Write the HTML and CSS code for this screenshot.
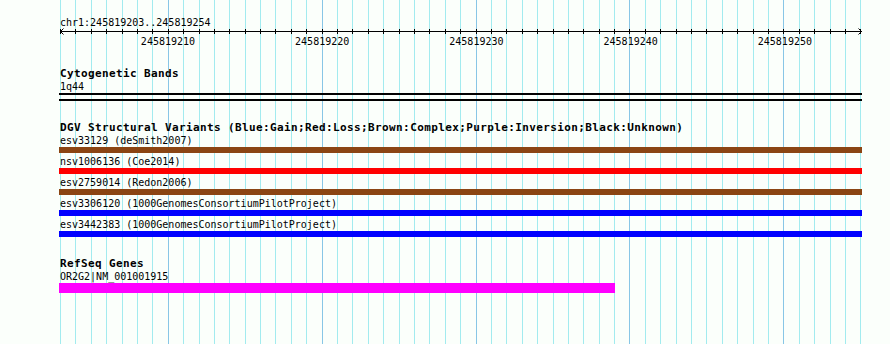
FILE: index.html
```html
<!DOCTYPE html>
<html>
<head>
<meta charset="utf-8">
<title>Genome browser</title>
<link rel="stylesheet" href="styles.css">
</head>
<body>
<div class="view">
  <div class="gridlines">
    <i></i><i></i><i></i><i></i><i></i><i></i><i></i><i class="major"></i><i></i><i></i>
    <i></i><i></i><i></i><i></i><i></i><i></i><i></i><i class="major"></i><i></i><i></i>
    <i></i><i></i><i></i><i></i><i></i><i></i><i></i><i class="major"></i><i></i><i></i>
    <i></i><i></i><i></i><i></i><i></i><i></i><i></i><i class="major"></i><i></i><i></i>
    <i></i><i></i><i></i><i></i><i></i><i></i><i></i><i class="major"></i><i></i><i></i>
    <i></i><i></i><i></i>
  </div>
  <div class="content">
    <div class="ruler">
      <div class="loc">chr1:245819203..245819254</div>
      <div class="axis">
        <div class="ticks">
          <i></i><i></i><i></i><i></i><i></i><i></i><i></i><i></i><i></i><i></i>
          <i></i><i></i><i></i><i></i><i></i><i></i><i></i><i></i><i></i><i></i>
          <i></i><i></i><i></i><i></i><i></i><i></i><i></i><i></i><i></i><i></i>
          <i></i><i></i><i></i><i></i><i></i><i></i><i></i><i></i><i></i><i></i>
          <i></i><i></i><i></i><i></i><i></i><i></i><i></i><i></i><i></i><i></i>
          <i></i><i></i><i></i>
        </div>
        <svg class="arrow arrow-left" width="5" height="7" viewBox="0 0 5 7"><path d="M3.5 0.5 L0.5 3.5 L3.5 6.5" fill="none" stroke="#000" stroke-width="1"/></svg>
        <svg class="arrow arrow-right" width="5" height="7" viewBox="0 0 5 7"><path d="M1.5 0.5 L4.5 3.5 L1.5 6.5" fill="none" stroke="#000" stroke-width="1"/></svg>
      </div>
      <div class="scale">
        <span class="s1">245819210</span>
        <span class="s2">245819220</span>
        <span class="s3">245819230</span>
        <span class="s4">245819240</span>
        <span class="s5">245819250</span>
      </div>
    </div>

    <div class="track track-cyto">
      <div class="track-title">Cytogenetic Bands</div>
      <div class="feature-label">1q44</div>
      <div class="band"></div>
    </div>

    <div class="track track-dgv">
      <div class="track-title">DGV Structural Variants (Blue:Gain;Red:Loss;Brown:Complex;Purple:Inversion;Black:Unknown)</div>
      <div class="feature">
        <div class="feature-label">esv33129 (deSmith2007)</div>
        <div class="bar bar-brown"></div>
      </div>
      <div class="feature">
        <div class="feature-label">nsv1006136 (Coe2014)</div>
        <div class="bar bar-red"></div>
      </div>
      <div class="feature">
        <div class="feature-label">esv2759014 (Redon2006)</div>
        <div class="bar bar-brown"></div>
      </div>
      <div class="feature">
        <div class="feature-label">esv3306120 (1000GenomesConsortiumPilotProject)</div>
        <div class="bar bar-blue"></div>
      </div>
      <div class="feature">
        <div class="feature-label">esv3442383 (1000GenomesConsortiumPilotProject)</div>
        <div class="bar bar-blue"></div>
      </div>
    </div>

    <div class="track track-refseq">
      <div class="track-title">RefSeq Genes</div>
      <div class="feature-label">OR2G2|NM_001001915</div>
      <div class="gene"></div>
    </div>
  </div>
</div>
</body>
</html>
```
FILE: styles.css
```css
html, body {
  margin: 0;
  padding: 0;
  background: #fbfffb;
}

.view {
  position: relative;
  width: 890px;
  height: 344px;
  overflow: hidden;
  font-family: "DejaVu Sans Mono", "Liberation Mono", monospace;
  font-size: 10px;
  color: #000;
}

/* vertical base grid behind everything */
.gridlines {
  position: absolute;
  top: 0;
  bottom: 0;
  left: 60px;
  width: 802px;
  display: flex;
  justify-content: space-between;
  z-index: 0;
}
.gridlines i {
  display: block;
  width: 1px;
  background: #a2ebef;
}
.gridlines i.major {
  background: #88c6e6;
}

.content {
  position: relative;
  z-index: 1;
  margin-left: 59px;
  width: 803px;
  padding-top: 17px;
}

/* ruler */
.loc {
  line-height: 11px;
  padding-left: 1px;
}
.axis {
  position: relative;
  margin-top: 1px;
  margin-left: 1px;
  width: 802px;
  height: 5px;
}
.ticks {
  height: 5px;
  display: flex;
  justify-content: space-between;
  background: linear-gradient(#000, #000) center / 100% 1px no-repeat;
}
.ticks i {
  display: block;
  width: 1px;
  background: #000;
}
.arrow {
  position: absolute;
  top: -1px;
}
.arrow-left {
  left: 0;
}
.arrow-right {
  right: 0;
}
.scale {
  margin-top: 2px;
  margin-left: 1px;
  width: 802px;
  display: grid;
  grid-template-columns: repeat(52, 1fr);
  line-height: 11px;
}
.scale span {
  justify-self: center;
  white-space: nowrap;
}
.scale .s1 { grid-column: 3 / span 10; }
.scale .s2 { grid-column: 13 / span 10; }
.scale .s3 { grid-column: 23 / span 10; }
.scale .s4 { grid-column: 33 / span 10; }
.scale .s5 { grid-column: 43 / span 10; }

/* tracks */
.track-title {
  font-weight: bold;
  font-size: 11px;
  letter-spacing: 0.38px;
  line-height: 12px;
  padding-left: 1px;
  white-space: nowrap;
}
.feature-label {
  position: relative;
  z-index: 1;
  line-height: 11px;
  margin-top: 1px;
  padding-left: 1px;
  white-space: nowrap;
}

.track-cyto {
  margin-top: 21px;
}
.band {
  margin-top: 1px;
  height: 4px;
  border-top: 2px solid #000;
  border-bottom: 2px solid #000;
}

.track-dgv {
  margin-top: 21px;
}
.feature {
  padding-bottom: 2px;
}
.bar {
  margin-top: 1px;
  height: 6px;
}
.bar-brown { background: #8b4513; }
.bar-red { background: #ff0000; }
.bar-blue { background: #0000ff; }

.track-refseq {
  margin-top: 19px;
}
.gene {
  margin-top: 1px;
  width: 556px;
  height: 10px;
  background: #ff00ff;
}
```
